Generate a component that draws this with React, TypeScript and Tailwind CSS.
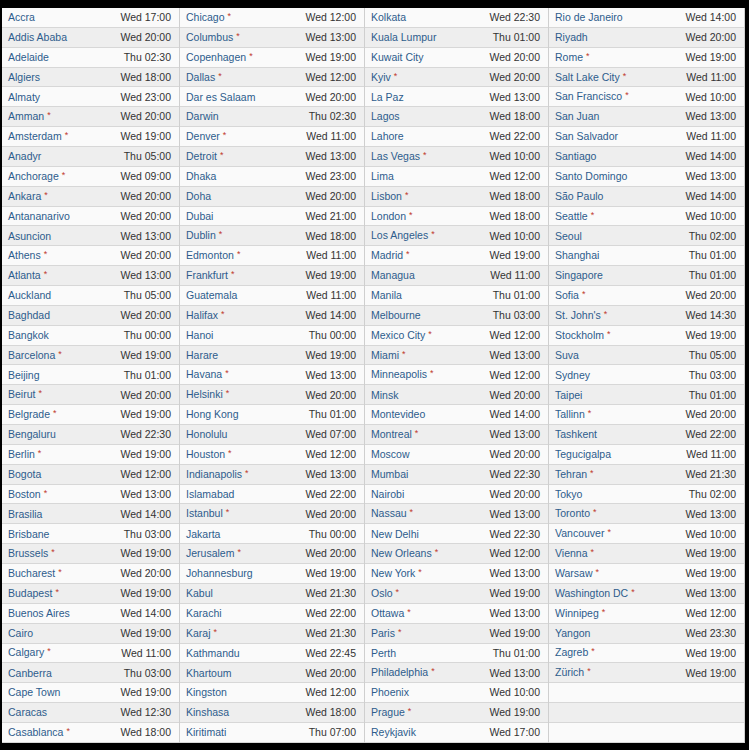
const columns: string[][] = [
  [
    'Accra|Wed 17:00', 'Addis Ababa|Wed 20:00', 'Adelaide|Thu 02:30', 'Algiers|Wed 18:00', 'Almaty|Wed 23:00',
    'Amman*|Wed 20:00', 'Amsterdam*|Wed 19:00', 'Anadyr|Thu 05:00', 'Anchorage*|Wed 09:00', 'Ankara*|Wed 20:00',
    'Antananarivo|Wed 20:00', 'Asuncion|Wed 13:00', 'Athens*|Wed 20:00', 'Atlanta*|Wed 13:00', 'Auckland|Thu 05:00',
    'Baghdad|Wed 20:00', 'Bangkok|Thu 00:00', 'Barcelona*|Wed 19:00', 'Beijing|Thu 01:00', 'Beirut*|Wed 20:00',
    'Belgrade*|Wed 19:00', 'Bengaluru|Wed 22:30', 'Berlin*|Wed 19:00', 'Bogota|Wed 12:00', 'Boston*|Wed 13:00',
    'Brasilia|Wed 14:00', 'Brisbane|Thu 03:00', 'Brussels*|Wed 19:00', 'Bucharest*|Wed 20:00', 'Budapest*|Wed 19:00',
    'Buenos Aires|Wed 14:00', 'Cairo|Wed 19:00', 'Calgary*|Wed 11:00', 'Canberra|Thu 03:00', 'Cape Town|Wed 19:00',
    'Caracas|Wed 12:30', 'Casablanca*|Wed 18:00',
  ],
  [
    'Chicago*|Wed 12:00', 'Columbus*|Wed 13:00', 'Copenhagen*|Wed 19:00', 'Dallas*|Wed 12:00', 'Dar es Salaam|Wed 20:00',
    'Darwin|Thu 02:30', 'Denver*|Wed 11:00', 'Detroit*|Wed 13:00', 'Dhaka|Wed 23:00', 'Doha|Wed 20:00',
    'Dubai|Wed 21:00', 'Dublin*|Wed 18:00', 'Edmonton*|Wed 11:00', 'Frankfurt*|Wed 19:00', 'Guatemala|Wed 11:00',
    'Halifax*|Wed 14:00', 'Hanoi|Thu 00:00', 'Harare|Wed 19:00', 'Havana*|Wed 13:00', 'Helsinki*|Wed 20:00',
    'Hong Kong|Thu 01:00', 'Honolulu|Wed 07:00', 'Houston*|Wed 12:00', 'Indianapolis*|Wed 13:00', 'Islamabad|Wed 22:00',
    'Istanbul*|Wed 20:00', 'Jakarta|Thu 00:00', 'Jerusalem*|Wed 20:00', 'Johannesburg|Wed 19:00', 'Kabul|Wed 21:30',
    'Karachi|Wed 22:00', 'Karaj*|Wed 21:30', 'Kathmandu|Wed 22:45', 'Khartoum|Wed 20:00', 'Kingston|Wed 12:00',
    'Kinshasa|Wed 18:00', 'Kiritimati|Thu 07:00',
  ],
  [
    'Kolkata|Wed 22:30', 'Kuala Lumpur|Thu 01:00', 'Kuwait City|Wed 20:00', 'Kyiv*|Wed 20:00', 'La Paz|Wed 13:00',
    'Lagos|Wed 18:00', 'Lahore|Wed 22:00', 'Las Vegas*|Wed 10:00', 'Lima|Wed 12:00', 'Lisbon*|Wed 18:00',
    'London*|Wed 18:00', 'Los Angeles*|Wed 10:00', 'Madrid*|Wed 19:00', 'Managua|Wed 11:00', 'Manila|Thu 01:00',
    'Melbourne|Thu 03:00', 'Mexico City*|Wed 12:00', 'Miami*|Wed 13:00', 'Minneapolis*|Wed 12:00', 'Minsk|Wed 20:00',
    'Montevideo|Wed 14:00', 'Montreal*|Wed 13:00', 'Moscow|Wed 20:00', 'Mumbai|Wed 22:30', 'Nairobi|Wed 20:00',
    'Nassau*|Wed 13:00', 'New Delhi|Wed 22:30', 'New Orleans*|Wed 12:00', 'New York*|Wed 13:00', 'Oslo*|Wed 19:00',
    'Ottawa*|Wed 13:00', 'Paris*|Wed 19:00', 'Perth|Thu 01:00', 'Philadelphia*|Wed 13:00', 'Phoenix|Wed 10:00',
    'Prague*|Wed 19:00', 'Reykjavik|Wed 17:00',
  ],
  [
    'Rio de Janeiro|Wed 14:00', 'Riyadh|Wed 20:00', 'Rome*|Wed 19:00', 'Salt Lake City*|Wed 11:00', 'San Francisco*|Wed 10:00',
    'San Juan|Wed 13:00', 'San Salvador|Wed 11:00', 'Santiago|Wed 14:00', 'Santo Domingo|Wed 13:00', 'São Paulo|Wed 14:00',
    'Seattle*|Wed 10:00', 'Seoul|Thu 02:00', 'Shanghai|Thu 01:00', 'Singapore|Thu 01:00', 'Sofia*|Wed 20:00',
    "St. John's*|Wed 14:30", 'Stockholm*|Wed 19:00', 'Suva|Thu 05:00', 'Sydney|Thu 03:00', 'Taipei|Thu 01:00',
    'Tallinn*|Wed 20:00', 'Tashkent|Wed 22:00', 'Tegucigalpa|Wed 11:00', 'Tehran*|Wed 21:30', 'Tokyo|Thu 02:00',
    'Toronto*|Wed 13:00', 'Vancouver*|Wed 10:00', 'Vienna*|Wed 19:00', 'Warsaw*|Wed 19:00', 'Washington DC*|Wed 13:00',
    'Winnipeg*|Wed 12:00', 'Yangon|Wed 23:30', 'Zagreb*|Wed 19:00', 'Zürich*|Wed 19:00', '', '', '',
  ],
]

const colWidths = ['w-[178px]', 'w-[185px]', 'w-[184px]', 'flex-1']

function Row({ entry, index }: { entry: string; index: number }) {
  const [rawName, time] = entry ? entry.split('|') : ['', '']
  const dst = rawName.endsWith('*')
  const name = dst ? rawName.slice(0, -1) : rawName
  return (
    <div
      className={`flex h-[19.86px] items-center justify-between border-b border-[#d7d7d7] pl-[6px] pr-[8px] ${
        index % 2 === 0 ? 'bg-[#fafafa]' : 'bg-[#eeeeee]'
      }`}
    >
      <span className="whitespace-nowrap text-[#2d5c8c]">
        {name}
        {dst && <span className="relative -top-[2px] ml-[3px] text-[9px] text-[#c0392b]">*</span>}
      </span>
      <span className="whitespace-nowrap text-[#333333]">{time}</span>
    </div>
  )
}

export default function App() {
  return (
    <div
      className="flex h-[750px] w-[749px] items-start bg-black pl-[2px] pr-[4px] pt-[8px] text-[10.5px] leading-none"
      style={{ fontFamily: '"Liberation Sans", Arial, sans-serif' }}
    >
      {columns.map((col, c) => (
        <div key={c} className={`${colWidths[c]} flex flex-col border-r border-[#cfcfcf] bg-white`}>
          {col.map((entry, i) => (
            <Row key={i} entry={entry} index={i} />
          ))}
        </div>
      ))}
    </div>
  )
}
